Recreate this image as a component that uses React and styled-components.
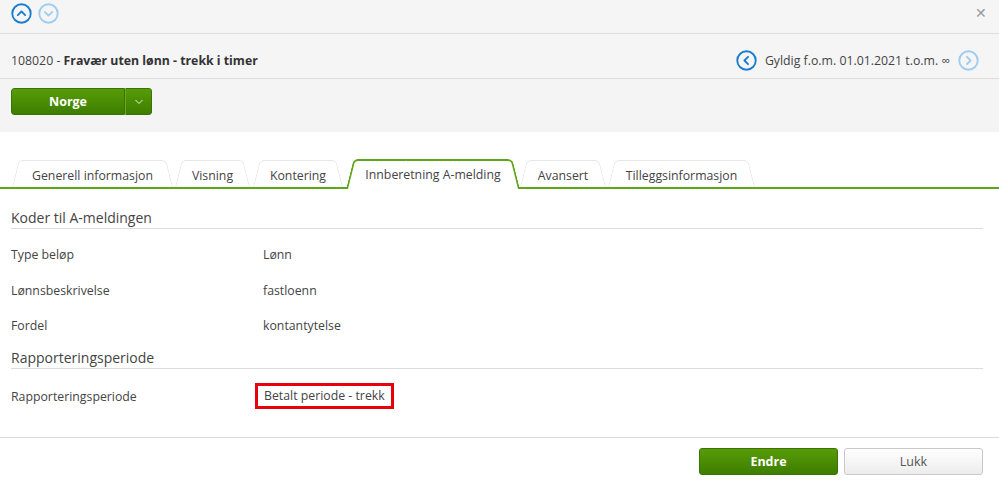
import React from 'react';
import styled, { createGlobalStyle, css } from 'styled-components';

const GlobalStyle = createGlobalStyle`
    body {
        margin: 0;
        background: #fff;
        font-family: "Open Sans", "Liberation Sans", sans-serif;
        font-size: 12.3px;
        color: #333;
    }
`;

const Page = styled.div`
    width: 999px;
    height: 482px;
    overflow: hidden;
    display: flex;
    flex-direction: column;
`;

const TopBar = styled.div`
    height: 34px;
    box-sizing: border-box;
    background: #f5f5f5;
    border-bottom: 1px solid #dcdcdc;
    display: flex;
    align-items: flex-start;
    padding: 3px 12px 0 11px;
    gap: 6px;
`;

const CloseButton = styled.span`
    margin-left: auto;
    margin-top: 3px;
    color: #999;
    font-size: 14px;
    line-height: 1;
    cursor: pointer;
`;

const Header = styled.div`
    height: 45px;
    box-sizing: border-box;
    background: #f5f5f5;
    border-bottom: 1px solid #dcdcdc;
    display: flex;
    align-items: center;
    padding: 9px 20px 0 11px;
`;

const Title = styled.div`
    flex: 1;
    color: #444;
    b {
        font-weight: 700;
        color: #333;
    }
`;

const Validity = styled.div`
    display: flex;
    align-items: center;
    gap: 8px;
    color: #444;
`;

const Toolbar = styled.div`
    height: 53px;
    background: #f4f4f4;
    padding: 9px 11px 0;
    box-sizing: border-box;
`;

const SplitButton = styled.div`
    display: inline-flex;
    height: 27px;
    border-radius: 3px;
    overflow: hidden;
`;

const greenFill = css`
    background: linear-gradient(#589c08, #3e7d00);
    color: #fff;
    border: 1px solid #3a7300;
`;

const SplitMain = styled.button`
    ${greenFill};
    width: 114px;
    font-family: inherit;
    font-weight: 700;
    font-size: 12.5px;
    border-radius: 3px 0 0 3px;
`;

const SplitArrow = styled.button`
    ${greenFill};
    width: 27px;
    border-left: 1px solid #6aaa2a;
    border-radius: 0 3px 3px 0;
    display: flex;
    align-items: center;
    justify-content: center;
    padding: 0;
`;

const Content = styled.div`
    flex: 1;
    padding: 26px 16px 0 11px;
`;

const TabStrip = styled.div`
    display: flex;
    align-items: flex-end;
    height: 29px;
    border-bottom: 2px solid #5ea51a;
    margin: 0 -16px 0 -11px;
    padding-left: 12px;
`;

const Tab = styled.div`
    position: relative;
    box-sizing: border-box;
    width: ${p => p.$w}px;
    height: ${p => (p.$active ? 30 : 27)}px;
    margin-right: ${p => p.$gap}px;
    margin-bottom: ${p => (p.$active ? -2 : 0)}px;
    padding-top: ${p => (p.$active ? 3 : 4)}px;
    padding-bottom: ${p => (p.$active ? 2 : 0)}px;
    display: flex;
    align-items: center;
    justify-content: center;
    color: #444;
    z-index: ${p => (p.$active ? 2 : 1)};
    white-space: nowrap;

    &::before,
    &::after {
        content: '';
        position: absolute;
        top: 0;
        bottom: 0;
        width: 60%;
        background: #fff;
        z-index: -1;
        border-top: ${p => (p.$active ? '2px solid #5ea51a' : '1px solid #e6e6e6')};
    }
    &::before {
        left: 0;
        border-left: ${p => (p.$active ? '2px solid #5ea51a' : '1px solid #e6e6e6')};
        border-top-left-radius: 5px;
        transform-origin: bottom left;
        transform: skewX(-14deg);
    }
    &::after {
        right: 0;
        border-right: ${p => (p.$active ? '2px solid #5ea51a' : '1px solid #e6e6e6')};
        border-top-right-radius: 5px;
        transform-origin: bottom right;
        transform: skewX(14deg);
    }
`;

const Section = styled.div`
    margin-top: ${p => p.$top}px;
`;

const SectionTitle = styled.div`
    font-size: 14px;
    line-height: 20px;
    color: #444;
    border-bottom: 1px solid #dcdcdc;
`;

const Rows = styled.div`
    padding-top: ${p => p.$top}px;
`;

const Row = styled.div`
    display: grid;
    grid-template-columns: 252px 1fr;
    align-items: center;
    height: 35.5px;
    color: #444;
`;

const Highlight = styled.span`
    justify-self: start;
    border: 3px solid #e8000b;
    padding: 1px 6px 1px 6px;
    margin-left: -8px;
    line-height: 18px;
`;

const Footer = styled.div`
    border-top: 1px solid #dcdcdc;
    height: 45px;
    display: flex;
    justify-content: flex-end;
    align-items: flex-start;
    padding: 10px 16px 0 0;
    gap: 6px;
    box-sizing: border-box;
`;

const FooterButton = styled.button`
    width: 139px;
    height: 27px;
    border-radius: 3px;
    font-family: inherit;
    font-size: 12.5px;
    ${p =>
        p.$primary
            ? css`
                  ${greenFill};
                  font-weight: 700;
              `
            : css`
                  background: linear-gradient(#fff, #ececec);
                  border: 1px solid #c8c8c8;
                  color: #555;
              `}
`;

const CircleArrow = ({ dir, light }) => {
    const color = light ? '#9fcdef' : '#1a7dcf';
    const paths = {
        up: 'M6.5 11.5 L10 8 L13.5 11.5',
        down: 'M6.5 8.5 L10 12 L13.5 8.5',
        left: 'M11.5 6.5 L8 10 L11.5 13.5',
        right: 'M8.5 6.5 L12 10 L8.5 13.5',
    };
    return (
        <svg width="21" height="21" viewBox="0 0 20 20">
            <circle cx="10" cy="10" r="8.8" fill="none" stroke={color} strokeWidth="1.8" />
            <path d={paths[dir]} fill="none" stroke={color} strokeWidth="1.8" strokeLinecap="round" strokeLinejoin="round" />
        </svg>
    );
};

const tabs = [
    { label: 'Generell informasjon', w: 161, gap: 2 },
    { label: 'Visning', w: 75, gap: 3 },
    { label: 'Kontering', w: 90, gap: 3 },
    { label: 'Innberetning A-melding', w: 174, gap: 0, active: true },
    { label: 'Avansert', w: 86, gap: 2 },
    { label: 'Tilleggsinformasjon', w: 147, gap: 0 },
];

const App = () => {
    return (
        <Page>
            <GlobalStyle />
            <TopBar>
                <CircleArrow dir="up" />
                <CircleArrow dir="down" light />
                <CloseButton>✕</CloseButton>
            </TopBar>
            <Header>
                <Title>
                    108020 - <b>Fravær uten lønn - trekk i timer</b>
                </Title>
                <Validity>
                    <CircleArrow dir="left" />
                    <span>Gyldig f.o.m. 01.01.2021 t.o.m. ∞</span>
                    <CircleArrow dir="right" light />
                </Validity>
            </Header>
            <Toolbar>
                <SplitButton>
                    <SplitMain>Norge</SplitMain>
                    <SplitArrow>
                        <svg width="10" height="6" viewBox="0 0 10 6">
                            <path d="M1.5 1 L5 4.5 L8.5 1" fill="none" stroke="#e6f2d8" strokeWidth="1" />
                        </svg>
                    </SplitArrow>
                </SplitButton>
            </Toolbar>
            <Content>
                <TabStrip>
                    {tabs.map(t => (
                        <Tab key={t.label} $active={t.active} $w={t.w} $gap={t.gap}>
                            {t.label}
                        </Tab>
                    ))}
                </TabStrip>
                <Section $top={19}>
                    <SectionTitle>Koder til A-meldingen</SectionTitle>
                    <Rows $top={8}>
                        <Row>
                            <span>Type beløp</span>
                            <span>Lønn</span>
                        </Row>
                        <Row>
                            <span>Lønnsbeskrivelse</span>
                            <span>fastloenn</span>
                        </Row>
                        <Row>
                            <span>Fordel</span>
                            <span>kontantytelse</span>
                        </Row>
                    </Rows>
                </Section>
                <Section $top={4}>
                    <SectionTitle>Rapporteringsperiode</SectionTitle>
                    <Rows $top={10}>
                        <Row>
                            <span>Rapporteringsperiode</span>
                            <Highlight>Betalt periode - trekk</Highlight>
                        </Row>
                    </Rows>
                </Section>
            </Content>
            <Footer>
                <FooterButton $primary>Endre</FooterButton>
                <FooterButton>Lukk</FooterButton>
            </Footer>
        </Page>
    );
};

export default App;
